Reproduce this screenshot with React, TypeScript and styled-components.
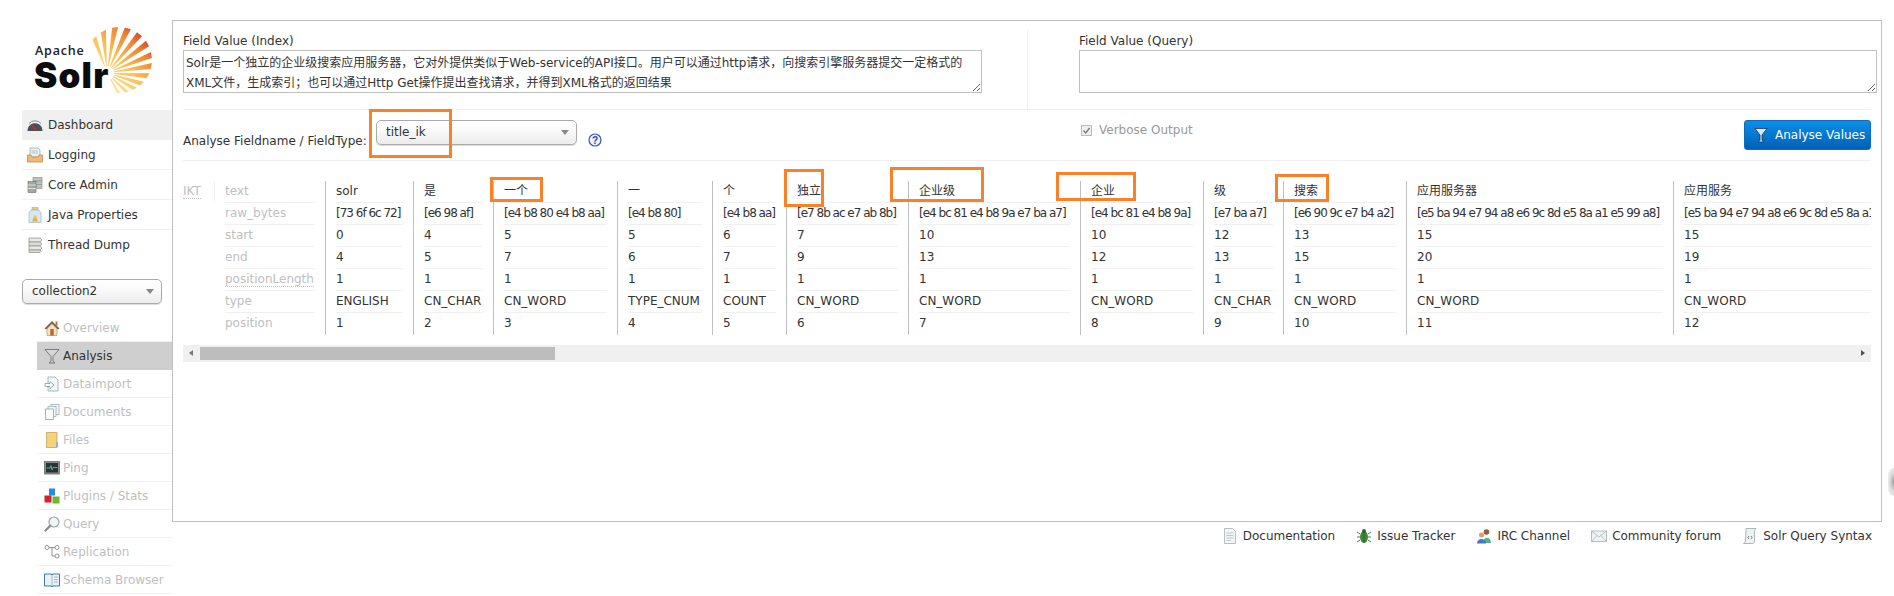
import React from 'react';
import styled, { createGlobalStyle } from 'styled-components';

const GlobalStyle = createGlobalStyle`
  html, body {
    margin: 0;
    padding: 0;
    background: #fff;
  }
  body {
    font-family: "DejaVu Sans", "Noto Sans CJK SC", sans-serif;
    font-size: 12px;
    color: #333;
  }
`;

const Page = styled.div`
  position: relative;
  display: flex;
  width: 1894px;
  height: 596px;
  overflow: hidden;
`;

const Sidebar = styled.aside`
  flex: none;
  width: 150px;
  margin-left: 22px;
`;

const LogoBox = styled.svg`
  display: block;
  width: 150px;
  height: 110px;
`;

const NavList = styled.nav`
  display: flex;
  flex-direction: column;
`;

const NavRow = styled.div<{ $active?: boolean }>`
  display: flex;
  align-items: center;
  gap: 5px;
  box-sizing: border-box;
  height: 30px;
  padding-left: 5px;
  color: #333;
  background: ${({ $active }) => ($active ? '#f0f0f0' : 'transparent')};
  border-bottom: 1px solid #f0f0f0;
  &:last-child {
    border-bottom: none;
  }
`;

const CoreSelect = styled.div`
  position: relative;
  box-sizing: border-box;
  width: 140px;
  height: 25px;
  margin-top: 19px;
  padding-left: 9px;
  line-height: 23px;
  color: #333;
  background: linear-gradient(#fff, #fafafa 40%, #ececec);
  border: 1px solid #aaa;
  border-radius: 5px;
  box-shadow: 0 1px 1px rgba(0, 0, 0, 0.15);
`;

const FieldSelect = styled(CoreSelect)`
  flex: none;
  width: 201px;
  margin-top: 0;
`;

const Caret = styled.span`
  position: absolute;
  right: 7px;
  top: 9px;
  width: 0;
  height: 0;
  border-left: 4px solid transparent;
  border-right: 4px solid transparent;
  border-top: 5px solid #888;
`;

const SubNav = styled.nav`
  display: flex;
  flex-direction: column;
  margin: 10px 0 0 15px;
`;

const SubRow = styled.div<{ $active?: boolean }>`
  display: flex;
  align-items: center;
  gap: 3px;
  box-sizing: border-box;
  height: 28px;
  padding-left: 7px;
  color: ${({ $active }) => ($active ? '#333' : '#c0c0c0')};
  background: ${({ $active }) => ($active ? '#cfcfcf' : 'transparent')};
  border-bottom: 1px solid ${({ $active }) => ($active ? '#cfcfcf' : '#f0f0f0')};
`;

const IconBox = styled.svg`
  flex: none;
  width: 16px;
  height: 16px;
`;

const Main = styled.main`
  flex: none;
  width: 1710px;
  margin-top: 20px;
`;

const Panel = styled.section`
  box-sizing: border-box;
  height: 502px;
  padding: 0 10px;
  border: 1px solid #c0c0c0;
`;

const FieldsRow = styled.div`
  display: flex;
  box-sizing: border-box;
  height: 89px;
  padding-top: 9px;
  border-bottom: 1px solid #f0f0f0;
`;

const IndexField = styled.div`
  flex: none;
  width: 844px;
  padding-top: 2px;
`;

const QueryField = styled.div`
  flex: none;
  width: 798px;
  padding: 2px 0 0 51px;
  border-left: 1px solid #f0f0f0;
`;

const FieldLabel = styled.label`
  display: block;
  height: 18px;
  line-height: 18px;
`;

const ValueBox = styled.textarea<{ $width: number }>`
  display: block;
  box-sizing: border-box;
  width: ${({ $width }) => $width}px;
  height: 43px;
  margin: 0;
  padding: 2px 2px 0;
  font-family: inherit;
  font-size: 12px;
  line-height: 20px;
  color: #333;
  border: 1px solid #c0c0c0;
  border-radius: 0;
  outline: none;
  overflow: hidden;
`;

const OptionsRow = styled.div`
  display: flex;
  align-items: flex-start;
  box-sizing: border-box;
  height: 51px;
  padding-top: 10px;
  border-bottom: 1px solid #f0f0f0;
`;

const FieldTypeGroup = styled.div`
  flex: none;
  display: flex;
  width: 895px;
`;

const FieldTypeLabel = styled.label`
  flex: none;
  width: 193px;
  padding-top: 12px;
  line-height: 18px;
  white-space: nowrap;
`;

const HelpIcon = styled.svg`
  flex: none;
  width: 14px;
  height: 14px;
  margin: 13px 0 0 11px;
`;

const Verbose = styled.div`
  display: flex;
  align-items: center;
  gap: 7px;
  height: 20px;
  padding-left: 3px;
  color: #999;
`;

const CheckMark = styled.svg`
  flex: none;
  width: 11px;
  height: 11px;
`;

const AnalyseButton = styled.button`
  display: flex;
  align-items: center;
  gap: 6px;
  box-sizing: border-box;
  width: 127px;
  height: 30px;
  margin-left: auto;
  padding: 0 0 0 8px;
  font-family: inherit;
  font-size: 12px;
  color: #fff;
  white-space: nowrap;
  background: linear-gradient(#0c8fe6, #0060b8);
  border: 1px solid #0a6cc4;
  border-radius: 3px;
`;

const ResultArea = styled.div`
  display: flex;
  width: 1688px;
  margin-top: 20px;
  overflow: hidden;
`;

const TokenizerName = styled.abbr`
  flex: none;
  box-sizing: border-box;
  width: 32px;
  height: 20px;
  line-height: 20px;
  color: #c0c0c0;
  text-decoration: none;
  border-right: 1px solid #f0f0f0;
  & > span {
    border-bottom: 1px dotted #c0c0c0;
  }
`;

const LabelColumn = styled.div`
  flex: none;
  width: 90px;
  margin: 0 10px 0 10px;
`;

const TokenColumn = styled.div<{ $width: number }>`
  flex: none;
  box-sizing: border-box;
  width: ${({ $width }) => $width}px;
  padding: 0 10px;
  border-left: 1px solid #c0c0c0;
`;

const Cell = styled.div<{ $raw?: boolean; $muted?: boolean }>`
  box-sizing: border-box;
  height: 22px;
  line-height: 21px;
  white-space: nowrap;
  color: ${({ $muted }) => ($muted ? '#c0c0c0' : '#333')};
  letter-spacing: ${({ $raw }) => ($raw ? '-1px' : 'normal')};
  border-bottom: 1px solid #f0f0f0;
  &:last-child {
    border-bottom: none;
  }
`;

const Dotted = styled.span`
  border-bottom: 1px dotted #c0c0c0;
`;

const ScrollTrack = styled.div`
  position: relative;
  width: 1688px;
  height: 17px;
  margin-top: 10px;
  background: #f0f0f0;
`;

const ScrollThumb = styled.div`
  position: absolute;
  left: 17px;
  top: 2px;
  width: 355px;
  height: 13px;
  background: #bdbdbd;
`;

const ScrollArrow = styled.span<{ $side: 'left' | 'right' }>`
  position: absolute;
  top: 5px;
  width: 0;
  height: 0;
  border-top: 3.5px solid transparent;
  border-bottom: 3.5px solid transparent;
  ${({ $side }) =>
    $side === 'left'
      ? 'left: 6px; border-right: 4px solid #777;'
      : 'right: 6px; border-left: 4px solid #505050;'}
`;

const FooterLinks = styled.footer`
  display: flex;
  justify-content: flex-end;
  gap: 21px;
  padding: 5px 10px 0 0;
`;

const FooterLink = styled.a`
  display: flex;
  align-items: center;
  gap: 5px;
  height: 18px;
  color: #333;
  white-space: nowrap;
`;

const Annotation = styled.div<{ $x: number; $y: number; $w: number; $h: number }>`
  position: absolute;
  left: ${({ $x }) => $x}px;
  top: ${({ $y }) => $y}px;
  box-sizing: border-box;
  width: ${({ $w }) => $w}px;
  height: ${({ $h }) => $h}px;
  border: 3px solid #fb8128;
`;

const EdgeShade = styled.div`
  position: absolute;
  right: 0;
  top: 468px;
  width: 6px;
  height: 28px;
  border-radius: 6px 0 0 6px;
  background: radial-gradient(ellipse at right, #9a9a9a 0, #d8d8d8 45%, #fff 100%);
`;

// Sun rays of the logo: wedges from one point, cut off by a circle
function rayPoints(angleDeg: number): string {
  const ox = 107;
  const oy = 73;
  const cx = 119;
  const cy = 60;
  const r = 33;
  const reach = (a: number) => {
    const dx = Math.cos(a);
    const dy = Math.sin(a);
    const fx = ox - cx;
    const fy = oy - cy;
    const b = fx * dx + fy * dy;
    const c = fx * fx + fy * fy - r * r;
    return -b + Math.sqrt(b * b - c);
  };
  const mid = (angleDeg * Math.PI) / 180;
  const half = (3.6 * Math.PI) / 180;
  const pt = (a: number, t: number) =>
    `${(ox + Math.cos(a) * t).toFixed(1)},${(oy + Math.sin(a) * t).toFixed(1)}`;
  const inner = 7;
  return [
    pt(mid - half, inner),
    pt(mid - half, reach(mid - half)),
    pt(mid + half, reach(mid + half)),
    pt(mid + half, inner),
  ].join(' ');
}

const rayAngles = [-110, -95, -80, -65, -50, -36, -22, -9, 4, 17, 30, 44, 60];

const Logo = () => (
  <LogoBox viewBox="22 0 150 110">
    <defs>
      <linearGradient id="sun" gradientUnits="userSpaceOnUse" x1="100" y1="82" x2="146" y2="36">
        <stop offset="0" stopColor="#ffe9a8" />
        <stop offset="0.45" stopColor="#fbbf55" />
        <stop offset="0.75" stopColor="#f08a34" />
        <stop offset="1" stopColor="#d6402b" />
      </linearGradient>
    </defs>
    {rayAngles.map((a) => (
      <polygon key={a} points={rayPoints(a)} fill="url(#sun)" />
    ))}
    <text x="35" y="55" fontFamily="Open Sans, sans-serif" fontWeight="600" fontSize="12.5" letterSpacing="0.8" fill="#222">
      Apache
    </text>
    <text x="34" y="88" fontFamily="Inter, sans-serif" fontWeight="900" fontSize="35" letterSpacing="1.2" fill="#0c0c0c">
      Solr
    </text>
  </LogoBox>
);

const icons: Record<string, React.ReactNode> = {
  dashboard: (
    <>
      <path d="M0.5 14 C0.5 3.5 15.5 3.5 15.5 14 Z" fill="#4b5058" />
      <path d="M2 6.5 A8 8 0 0 1 14 6.5" fill="none" stroke="#8a8f96" strokeWidth="1" />
      <path d="M3 8 L10 13.5" stroke="#d8342a" strokeWidth="1" />
    </>
  ),
  logging: (
    <>
      <path d="M3 1 H11 L13 3 V10 H3 Z" fill="#e8f2f2" stroke="#8aa3a8" strokeWidth="0.7" />
      <path d="M4.5 4 H11 M4.5 6 H11" stroke="#9db3b8" strokeWidth="0.7" />
      <path d="M0.5 8 H4 L5 10 H11 L12 8 H15.5 V15 H0.5 Z" fill="#f0b878" stroke="#c08a50" strokeWidth="0.8" />
    </>
  ),
  coreAdmin: (
    <>
      <rect x="6" y="0.5" width="9" height="11" fill="#b8c4bc" stroke="#7f8a84" strokeWidth="0.6" />
      <path d="M6 4 H15 M6 7.5 H15" stroke="#7f8a84" strokeWidth="0.6" />
      <rect x="1" y="4.5" width="8" height="11" fill="#a8a8a0" stroke="#6a6a64" strokeWidth="0.6" />
      <path d="M1 8 H9 M1 11.5 H9" stroke="#eee" strokeWidth="0.8" />
    </>
  ),
  javaProps: (
    <>
      <rect x="5" y="0.5" width="6" height="2.5" fill="#e8c88a" stroke="#b89a60" strokeWidth="0.5" />
      <path d="M4 3 H12 L14 6 V15.5 H2 V6 Z" fill="#d8e8f2" stroke="#9ab4c6" strokeWidth="0.7" />
      <path d="M5 14.5 L6.5 10.5 H9.5 L11 14.5 Z" fill="#e2b246" />
      <rect x="6.5" y="8.5" width="3" height="2" fill="#eac667" />
    </>
  ),
  threadDump: (
    <>
      <path d="M2 1 H13 L15 3 L13 5 H2 Z" fill="#e8e8e4" stroke="#8e8e88" strokeWidth="0.7" />
      <path d="M2 5 H13 L15 7 L13 9 H2 Z" fill="#dcdcd6" stroke="#8e8e88" strokeWidth="0.7" />
      <path d="M2 9 H13 L15 11 L13 13 H2 Z" fill="#e8e8e4" stroke="#8e8e88" strokeWidth="0.7" />
      <path d="M2 13 H13 L14 14.5 L13 15.5 H2 Z" fill="#dcdcd6" stroke="#8e8e88" strokeWidth="0.7" />
    </>
  ),
  overview: (
    <>
      <path d="M8 1 L0.5 8.5 L2 9.5 L8 3.5 L14 9.5 L15.5 8.5 Z" fill="#8a5a38" />
      <path d="M3 9 L8 4 L13 9 V15.5 H3 Z" fill="#f4e2c4" stroke="#a88860" strokeWidth="0.6" />
      <rect x="6.3" y="9" width="3.4" height="6.5" fill="#c0632c" />
      <rect x="11.5" y="1.5" width="2" height="4" fill="#a87850" />
    </>
  ),
  analysis: (
    <path d="M1 1.5 H15 L9 8.5 V13.5 L11 15 H5 L7 13.5 V8.5 Z" fill="#d6d6d6" stroke="#666" strokeWidth="0.8" />
  ),
  dataimport: (
    <>
      <path d="M4 1 H11 L14 4 V15 H4 Z" fill="#f2f8f8" stroke="#8fa8aa" strokeWidth="0.8" />
      <path d="M1 7.5 H6 V5.5 L10 9 L6 12.5 V10.5 H1 Z" fill="#fff" stroke="#7f9a9c" strokeWidth="0.8" />
    </>
  ),
  documents: (
    <>
      <rect x="7" y="0.5" width="8" height="10" fill="#eef6f6" stroke="#8fa8aa" strokeWidth="0.7" />
      <rect x="4" y="2.5" width="8" height="10" fill="#f4f8f8" stroke="#8fa8aa" strokeWidth="0.7" />
      <rect x="1.5" y="5" width="8" height="10.5" fill="#fafcfc" stroke="#7f9a9c" strokeWidth="0.7" />
    </>
  ),
  files: (
    <>
      <path d="M2.5 0.5 H13 V15.5 H2.5 Z" fill="#f5d27e" stroke="#c8a24e" strokeWidth="0.8" />
      <rect x="12" y="10" width="2" height="5" fill="#7fb8d8" />
    </>
  ),
  ping: (
    <>
      <rect x="0.5" y="1.5" width="15" height="12.5" fill="#8c8c8c" stroke="#6a6a6a" strokeWidth="0.8" />
      <rect x="2" y="3" width="12" height="9.5" fill="#2c3234" />
      <path d="M2.5 8 H6 L7 5.5 L8 10 L9 7.5 H13.5" fill="none" stroke="#4fd0a8" strokeWidth="0.8" />
    </>
  ),
  plugins: (
    <>
      <rect x="5" y="0.5" width="6" height="7" fill="#2a8ae0" />
      <rect x="0.5" y="7.5" width="7" height="7" fill="#d8202a" />
      <rect x="8.5" y="8.5" width="7" height="7" fill="#6ab82e" />
    </>
  ),
  query: (
    <>
      <circle cx="10" cy="6" r="5" fill="#f0f4f4" stroke="#9aa4a4" strokeWidth="1.2" />
      <path d="M6.2 9.8 L1.5 14.5" stroke="#8a8a8a" strokeWidth="2.2" strokeLinecap="round" />
    </>
  ),
  replication: (
    <>
      <circle cx="3" cy="3.5" r="2" fill="#fff" stroke="#8a8a8a" strokeWidth="0.9" />
      <circle cx="13" cy="3.5" r="2" fill="#fff" stroke="#8a8a8a" strokeWidth="0.9" />
      <circle cx="13" cy="12" r="2" fill="#fff" stroke="#8a8a8a" strokeWidth="0.9" />
      <path d="M5 3.5 H11 M8 3.5 V12 H11" fill="none" stroke="#8a8a8a" strokeWidth="0.9" />
    </>
  ),
  schema: (
    <>
      <path d="M0.5 2 H7.5 L8 3 L8.5 2 H15.5 V14 H8.5 L8 15 L7.5 14 H0.5 Z" fill="#eaf2f6" stroke="#2a6a9c" strokeWidth="0.9" />
      <path d="M8 3 V14 M10 5 H14 M10 7.5 H14 M10 10 H14" stroke="#8aa4b4" strokeWidth="0.7" />
    </>
  ),
  documentation: (
    <>
      <path d="M2.5 0.5 H10.5 L13.5 3.5 V15.5 H2.5 Z" fill="#f2f6f6" stroke="#a4b2b4" strokeWidth="0.8" />
      <path d="M4.5 5 H11.5 M4.5 7.5 H11.5 M4.5 10 H11.5 M4.5 12.5 H9" stroke="#a8bcc0" strokeWidth="0.8" />
    </>
  ),
  issue: (
    <>
      <ellipse cx="8" cy="9" rx="4" ry="6" fill="#3e8a3a" />
      <circle cx="8" cy="3" r="2" fill="#2d6a2a" />
      <path d="M8 3 V15 M4 6 L1 4 M4 9 H1 M4 12 L1 14 M12 6 L15 4 M12 9 H15 M12 12 L15 14" stroke="#2d5a2a" strokeWidth="0.8" />
    </>
  ),
  irc: (
    <>
      <circle cx="10.5" cy="4" r="2.8" fill="#a0583a" />
      <path d="M7 15 C7 8 15 8 15 15 Z" fill="#58b088" />
      <circle cx="5.5" cy="7" r="2.5" fill="#d8a070" />
      <path d="M1 15.5 C1 9.5 10 9.5 10 15.5 Z" fill="#3a7ac8" />
    </>
  ),
  forum: (
    <>
      <rect x="0.5" y="3" width="15" height="10.5" fill="#eef2f2" stroke="#a4b0b0" strokeWidth="0.8" />
      <path d="M0.5 3 L8 9 L15.5 3 M0.5 13.5 L6 7.5 M15.5 13.5 L10 7.5" fill="none" stroke="#a4b0b0" strokeWidth="0.7" />
    </>
  ),
  syntax: (
    <>
      <path d="M4 0.5 H14 L12.5 2.5 V13 C12.5 15.5 11 15.5 10 15.5 H1.5 C3 15 3.5 14 3.5 13 Z" fill="#eef2f0" stroke="#9aa8a4" strokeWidth="0.8" />
      <path d="M7 8 L6 9.5 L7 11 M9 8 L10 9.5 L9 11" fill="none" stroke="#667" strokeWidth="0.8" />
    </>
  ),
};

const Icon = ({ name }: { name: string }) => <IconBox viewBox="0 0 16 16">{icons[name]}</IconBox>;

const mainNav = [
  { label: 'Dashboard', icon: 'dashboard', active: true },
  { label: 'Logging', icon: 'logging' },
  { label: 'Core Admin', icon: 'coreAdmin' },
  { label: 'Java Properties', icon: 'javaProps' },
  { label: 'Thread Dump', icon: 'threadDump' },
];

const coreNav = [
  { label: 'Overview', icon: 'overview' },
  { label: 'Analysis', icon: 'analysis', active: true },
  { label: 'Dataimport', icon: 'dataimport' },
  { label: 'Documents', icon: 'documents' },
  { label: 'Files', icon: 'files' },
  { label: 'Ping', icon: 'ping' },
  { label: 'Plugins / Stats', icon: 'plugins' },
  { label: 'Query', icon: 'query' },
  { label: 'Replication', icon: 'replication' },
  { label: 'Schema Browser', icon: 'schema' },
];

const footerLinks = [
  { label: 'Documentation', icon: 'documentation' },
  { label: 'Issue Tracker', icon: 'issue' },
  { label: 'IRC Channel', icon: 'irc' },
  { label: 'Community forum', icon: 'forum' },
  { label: 'Solr Query Syntax', icon: 'syntax' },
];

const rowLabels = ['text', 'raw_bytes', 'start', 'end', 'positionLength', 'type', 'position'];

const tokens = [
  { width: 88, values: ['solr', '[73 6f 6c 72]', '0', '4', '1', 'ENGLISH', '1'] },
  { width: 80, values: ['是', '[e6 98 af]', '4', '5', '1', 'CN_CHAR', '2'] },
  { width: 124, values: ['一个', '[e4 b8 80 e4 b8 aa]', '5', '7', '1', 'CN_WORD', '3'] },
  { width: 95, values: ['一', '[e4 b8 80]', '5', '6', '1', 'TYPE_CNUM', '4'] },
  { width: 74, values: ['个', '[e4 b8 aa]', '6', '7', '1', 'COUNT', '5'] },
  { width: 122, values: ['独立', '[e7 8b ac e7 ab 8b]', '7', '9', '1', 'CN_WORD', '6'] },
  { width: 172, values: ['企业级', '[e4 bc 81 e4 b8 9a e7 ba a7]', '10', '13', '1', 'CN_WORD', '7'] },
  { width: 123, values: ['企业', '[e4 bc 81 e4 b8 9a]', '10', '12', '1', 'CN_WORD', '8'] },
  { width: 80, values: ['级', '[e7 ba a7]', '12', '13', '1', 'CN_CHAR', '9'] },
  { width: 123, values: ['搜索', '[e6 90 9c e7 b4 a2]', '13', '15', '1', 'CN_WORD', '10'] },
  { width: 267, values: ['应用服务器', '[e5 ba 94 e7 94 a8 e6 9c 8d e5 8a a1 e5 99 a8]', '15', '20', '1', 'CN_WORD', '11'] },
  { width: 267, values: ['应用服务', '[e5 ba 94 e7 94 a8 e6 9c 8d e5 8a a1]', '15', '19', '1', 'CN_WORD', '12'] },
];

// Orange marks drawn over the screenshot by its author
const annotations = [
  { x: 369, y: 109, w: 83, h: 49 },
  { x: 490, y: 177, w: 53, h: 25 },
  { x: 784, y: 169, w: 40, h: 38 },
  { x: 890, y: 167, w: 94, h: 35 },
  { x: 1056, y: 172, w: 80, h: 29 },
  { x: 1275, y: 174, w: 54, h: 28 },
];

const indexText =
  'Solr是一个独立的企业级搜索应用服务器，它对外提供类似于Web-service的API接口。用户可以通过http请求，向搜索引擎服务器提交一定格式的XML文件，生成索引；也可以通过Http Get操作提出查找请求，并得到XML格式的返回结果';

export default function App() {
  return (
    <Page>
      <GlobalStyle />
      <Sidebar>
        <Logo />
        <NavList>
          {mainNav.map((item) => (
            <NavRow key={item.label} $active={item.active}>
              <Icon name={item.icon} />
              {item.label}
            </NavRow>
          ))}
        </NavList>
        <CoreSelect>
          collection2
          <Caret />
        </CoreSelect>
        <SubNav>
          {coreNav.map((item) => (
            <SubRow key={item.label} $active={item.active}>
              <Icon name={item.icon} />
              {item.label}
            </SubRow>
          ))}
        </SubNav>
      </Sidebar>

      <Main>
        <Panel>
          <FieldsRow>
            <IndexField>
              <FieldLabel>Field Value (Index)</FieldLabel>
              <ValueBox $width={799} defaultValue={indexText} />
            </IndexField>
            <QueryField>
              <FieldLabel>Field Value (Query)</FieldLabel>
              <ValueBox $width={798} />
            </QueryField>
          </FieldsRow>

          <OptionsRow>
            <FieldTypeGroup>
              <FieldTypeLabel>Analyse Fieldname / FieldType:</FieldTypeLabel>
              <FieldSelect>
                title_ik
                <Caret />
              </FieldSelect>
              <HelpIcon viewBox="0 0 14 14">
                <circle cx="7" cy="7" r="6" fill="#eef2fc" stroke="#3454c0" strokeWidth="1.2" />
                <text x="7" y="10.5" textAnchor="middle" fontSize="10" fontWeight="700" fontFamily="Liberation Sans, sans-serif" fill="#2a46b0">
                  ?
                </text>
              </HelpIcon>
            </FieldTypeGroup>
            <Verbose>
              <CheckMark viewBox="0 0 11 11">
                <rect x="0.5" y="0.5" width="10" height="10" fill="#eee" stroke="#bbb" />
                <path d="M2.5 5.5 L4.8 8 L8.5 3" fill="none" stroke="#777" strokeWidth="1.3" />
              </CheckMark>
              Verbose Output
            </Verbose>
            <AnalyseButton>
              <IconBox viewBox="0 0 16 16">
                <path d="M2 1.5 H14 L9 8 V13.5 L11 15 H5 L7 13.5 V8 Z" fill="#d8e8f4" stroke="#1a3a5c" strokeWidth="0.8" />
              </IconBox>
              Analyse Values
            </AnalyseButton>
          </OptionsRow>

          <ResultArea>
            <TokenizerName>
              <span>IKT</span>
            </TokenizerName>
            <LabelColumn>
              {rowLabels.map((label) => (
                <Cell key={label} $muted>
                  {label === 'positionLength' ? <Dotted>{label}</Dotted> : label}
                </Cell>
              ))}
            </LabelColumn>
            {tokens.map((token, i) => (
              <TokenColumn key={i} $width={token.width}>
                {token.values.map((value, j) => (
                  <Cell key={j} $raw={j === 1}>
                    {value}
                  </Cell>
                ))}
              </TokenColumn>
            ))}
          </ResultArea>

          <ScrollTrack>
            <ScrollArrow $side="left" />
            <ScrollThumb />
            <ScrollArrow $side="right" />
          </ScrollTrack>
        </Panel>

        <FooterLinks>
          {footerLinks.map((link) => (
            <FooterLink key={link.label}>
              <Icon name={link.icon} />
              {link.label}
            </FooterLink>
          ))}
        </FooterLinks>
      </Main>

      {annotations.map((a) => (
        <Annotation key={a.x} $x={a.x} $y={a.y} $w={a.w} $h={a.h} />
      ))}
      <EdgeShade />
    </Page>
  );
}
